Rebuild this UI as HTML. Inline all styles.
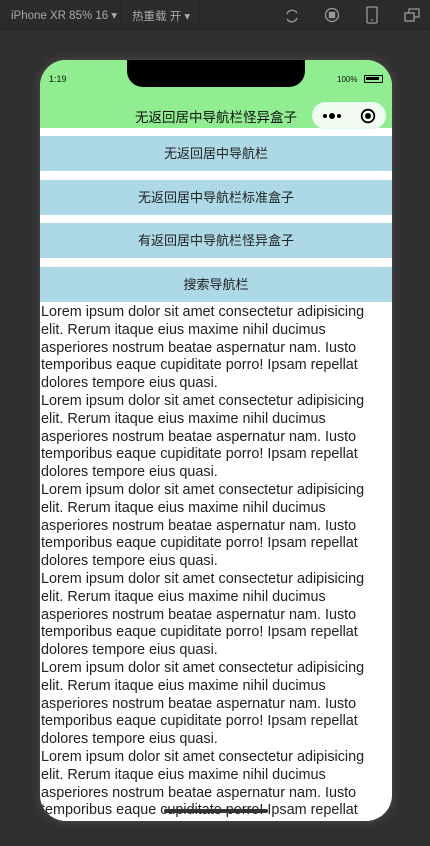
<!DOCTYPE html>
<html><head><meta charset="utf-8"><style>
*{margin:0;padding:0;box-sizing:border-box}
body{width:430px;height:846px;background:#303030;position:relative;overflow:hidden;font-family:"Liberation Sans","Noto Sans CJK SC",sans-serif}
.tb{position:absolute;left:0;top:0;width:430px;height:30px;background:#2b2b2b;border-bottom:1px solid #262626;color:#a9a9a9;font-size:11.5px}
.tb span{position:absolute;top:8px}
.sep{position:absolute;top:0;width:1px;height:30px;background:#252525}
.phone{position:absolute;left:40px;top:60px;width:352px;height:761px;background:#fff;border-radius:26px;overflow:hidden;box-shadow:0 0 10px rgba(255,255,255,.15)}
.nav{position:absolute;left:0;top:0;width:352px;height:68px;background:#90ee90}
.notch{position:absolute;left:87px;top:0;width:178px;height:27px;background:#000;border-radius:0 0 16px 16px}
.time{position:absolute;left:9px;top:14px;font-size:9px;color:#111}
.bat{position:absolute;left:297px;top:15px;font-size:8px;color:#111}
.batt{position:absolute;left:324px;top:15px;width:19px;height:8px;border:1.5px solid #000;border-radius:1px}
.batt:after{content:"";position:absolute;left:1px;top:1px;width:13px;height:3px;background:#000}
.title{position:absolute;left:95px;top:46px;font-size:13.5px;color:#111}
.cap{position:absolute;left:272px;top:42px;width:74px;height:27px;border-radius:14px;background:#f1fbf0;border:1px solid #dfe}
.btn{position:absolute;left:0;width:352px;height:35px;background:#add8e6;text-align:center;line-height:35px;font-size:13px;color:#222}
.txt{position:absolute;left:1px;top:244px;width:352px;font-size:14.4px;line-height:17.8px;color:#222;white-space:nowrap}
</style></head><body>
<div class="tb"><span style="left:11px">iPhone XR 85% 16 ▾</span><div class="sep" style="left:120px"></div><span style="left:132px">热重载 开 ▾</span><div class="sep" style="left:199px"></div>
<svg style="position:absolute;left:284px;top:8px" width="16" height="16" viewBox="0 0 16 16" fill="none" stroke="#999" stroke-width="1.3"><path d="M3 6a5.5 5.5 0 0 1 10-1M13 10a5.5 5.5 0 0 1-10 1"/></svg>
<svg style="position:absolute;left:324px;top:7px" width="16" height="16" viewBox="0 0 16 16" fill="none" stroke="#999" stroke-width="1.3"><circle cx="8" cy="8" r="6.5"/><rect x="5.5" y="5.5" width="5" height="5" fill="#999"/></svg>
<svg style="position:absolute;left:366px;top:6px" width="12" height="18" viewBox="0 0 12 18" fill="none" stroke="#999" stroke-width="1.3"><rect x="1" y="1" width="10" height="16" rx="1"/><path d="M5 14h2"/></svg>
<svg style="position:absolute;left:404px;top:8px" width="16" height="15" viewBox="0 0 16 15" fill="none" stroke="#999" stroke-width="1.3"><rect x="1" y="5" width="9" height="8"/><path d="M5 5V1h10v8h-5"/></svg>
</div>
<div class="phone">
<div class="nav"></div>
<div class="notch"></div>
<div class="time">1:19</div>
<div class="bat">100%</div><div class="batt"></div>
<div class="title">无返回居中导航栏怪异盒子</div>
<div class="cap">
<svg style="position:absolute;left:9px;top:8px" width="22" height="10"><circle cx="3" cy="5" r="2" fill="#000"/><circle cx="10" cy="5" r="3" fill="#000"/><circle cx="17" cy="5" r="2" fill="#000"/></svg>
<svg style="position:absolute;left:47px;top:5px" width="16" height="16"><circle cx="8" cy="8" r="6.3" fill="none" stroke="#000" stroke-width="1.8"/><circle cx="8" cy="8" r="3" fill="#000"/></svg>
</div>
<div class="btn" style="top:76px">无返回居中导航栏</div>
<div class="btn" style="top:120px">无返回居中导航栏标准盒子</div>
<div class="btn" style="top:163px">有返回居中导航栏怪异盒子</div>
<div class="btn" style="top:207px">搜索导航栏</div>
<div class="txt">
Lorem ipsum dolor sit amet consectetur adipisicing<br>elit. Rerum itaque eius maxime nihil ducimus<br>asperiores nostrum beatae aspernatur nam. Iusto<br>temporibus eaque cupiditate porro! Ipsam repellat<br>dolores tempore eius quasi.<br>
Lorem ipsum dolor sit amet consectetur adipisicing<br>elit. Rerum itaque eius maxime nihil ducimus<br>asperiores nostrum beatae aspernatur nam. Iusto<br>temporibus eaque cupiditate porro! Ipsam repellat<br>dolores tempore eius quasi.<br>
Lorem ipsum dolor sit amet consectetur adipisicing<br>elit. Rerum itaque eius maxime nihil ducimus<br>asperiores nostrum beatae aspernatur nam. Iusto<br>temporibus eaque cupiditate porro! Ipsam repellat<br>dolores tempore eius quasi.<br>
Lorem ipsum dolor sit amet consectetur adipisicing<br>elit. Rerum itaque eius maxime nihil ducimus<br>asperiores nostrum beatae aspernatur nam. Iusto<br>temporibus eaque cupiditate porro! Ipsam repellat<br>dolores tempore eius quasi.<br>
Lorem ipsum dolor sit amet consectetur adipisicing<br>elit. Rerum itaque eius maxime nihil ducimus<br>asperiores nostrum beatae aspernatur nam. Iusto<br>temporibus eaque cupiditate porro! Ipsam repellat<br>dolores tempore eius quasi.<br>
Lorem ipsum dolor sit amet consectetur adipisicing<br>elit. Rerum itaque eius maxime nihil ducimus<br>asperiores nostrum beatae aspernatur nam. Iusto<br>temporibus eaque cupiditate porro! Ipsam repellat<br>dolores tempore eius quasi.
</div>
<div style="position:absolute;left:124px;top:749px;width:104px;height:4px;border-radius:2px;background:#333"></div>
</div>
</body></html>
